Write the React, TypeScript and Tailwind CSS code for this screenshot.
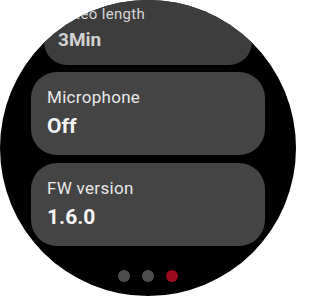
import React from 'react'

type Item = { label: string; value: string }

const items: Item[] = [
  { label: 'Video length', value: '3Min' },
  { label: 'Microphone', value: 'Off' },
  { label: 'FW version', value: '1.6.0' },
]

function Chip({ item }: { item: Item }) {
  return (
    <div className="flex h-[83px] w-[234px] shrink-0 flex-col rounded-[26px] bg-[#444444] pl-4 pt-[15px]">
      <div className="text-[17px] leading-[20px] tracking-[0.3px] text-[#e8e8e8]">{item.label}</div>
      <div className="mt-[7px] text-[21px] font-bold leading-[24px] text-[#f4f4f4]">{item.value}</div>
    </div>
  )
}

// the top chip is shrunk as it scrolls off the round edge
function EdgeChip({ item }: { item: Item }) {
  return (
    <div className="flex h-[74px] w-[208px] shrink-0 flex-col rounded-[23px] bg-[#3d3d3d] pl-[14px] pt-[14px]">
      <div className="text-[15px] leading-[18px] tracking-[0.3px] text-[#d6d6d6]">{item.label}</div>
      <div className="mt-[6px] text-[19px] font-bold leading-[22px] text-[#d2d2d2]">{item.value}</div>
    </div>
  )
}

export default function App() {
  return (
    <div className="h-[296px] w-[296px] bg-white" style={{ fontFamily: 'Roboto, "Noto Sans", sans-serif' }}>
      <div className="relative h-[296px] w-[296px] overflow-hidden rounded-full bg-black">
        <div className="mt-[-9px] flex flex-col items-center">
          <EdgeChip item={items[0]} />
          <div className="mt-[7px]">
            <Chip item={items[1]} />
          </div>
          <div className="mt-2">
            <Chip item={items[2]} />
          </div>
        </div>

        {/* page indicator */}
        <div className="absolute left-0 right-0 top-[270px] flex justify-center gap-[12px]">
          <div className="h-3 w-3 rounded-full bg-[#4d4d4d]" />
          <div className="h-3 w-3 rounded-full bg-[#4d4d4d]" />
          <div className="h-3 w-3 rounded-full bg-[#9e0a1e]" />
        </div>
      </div>
    </div>
  )
}
